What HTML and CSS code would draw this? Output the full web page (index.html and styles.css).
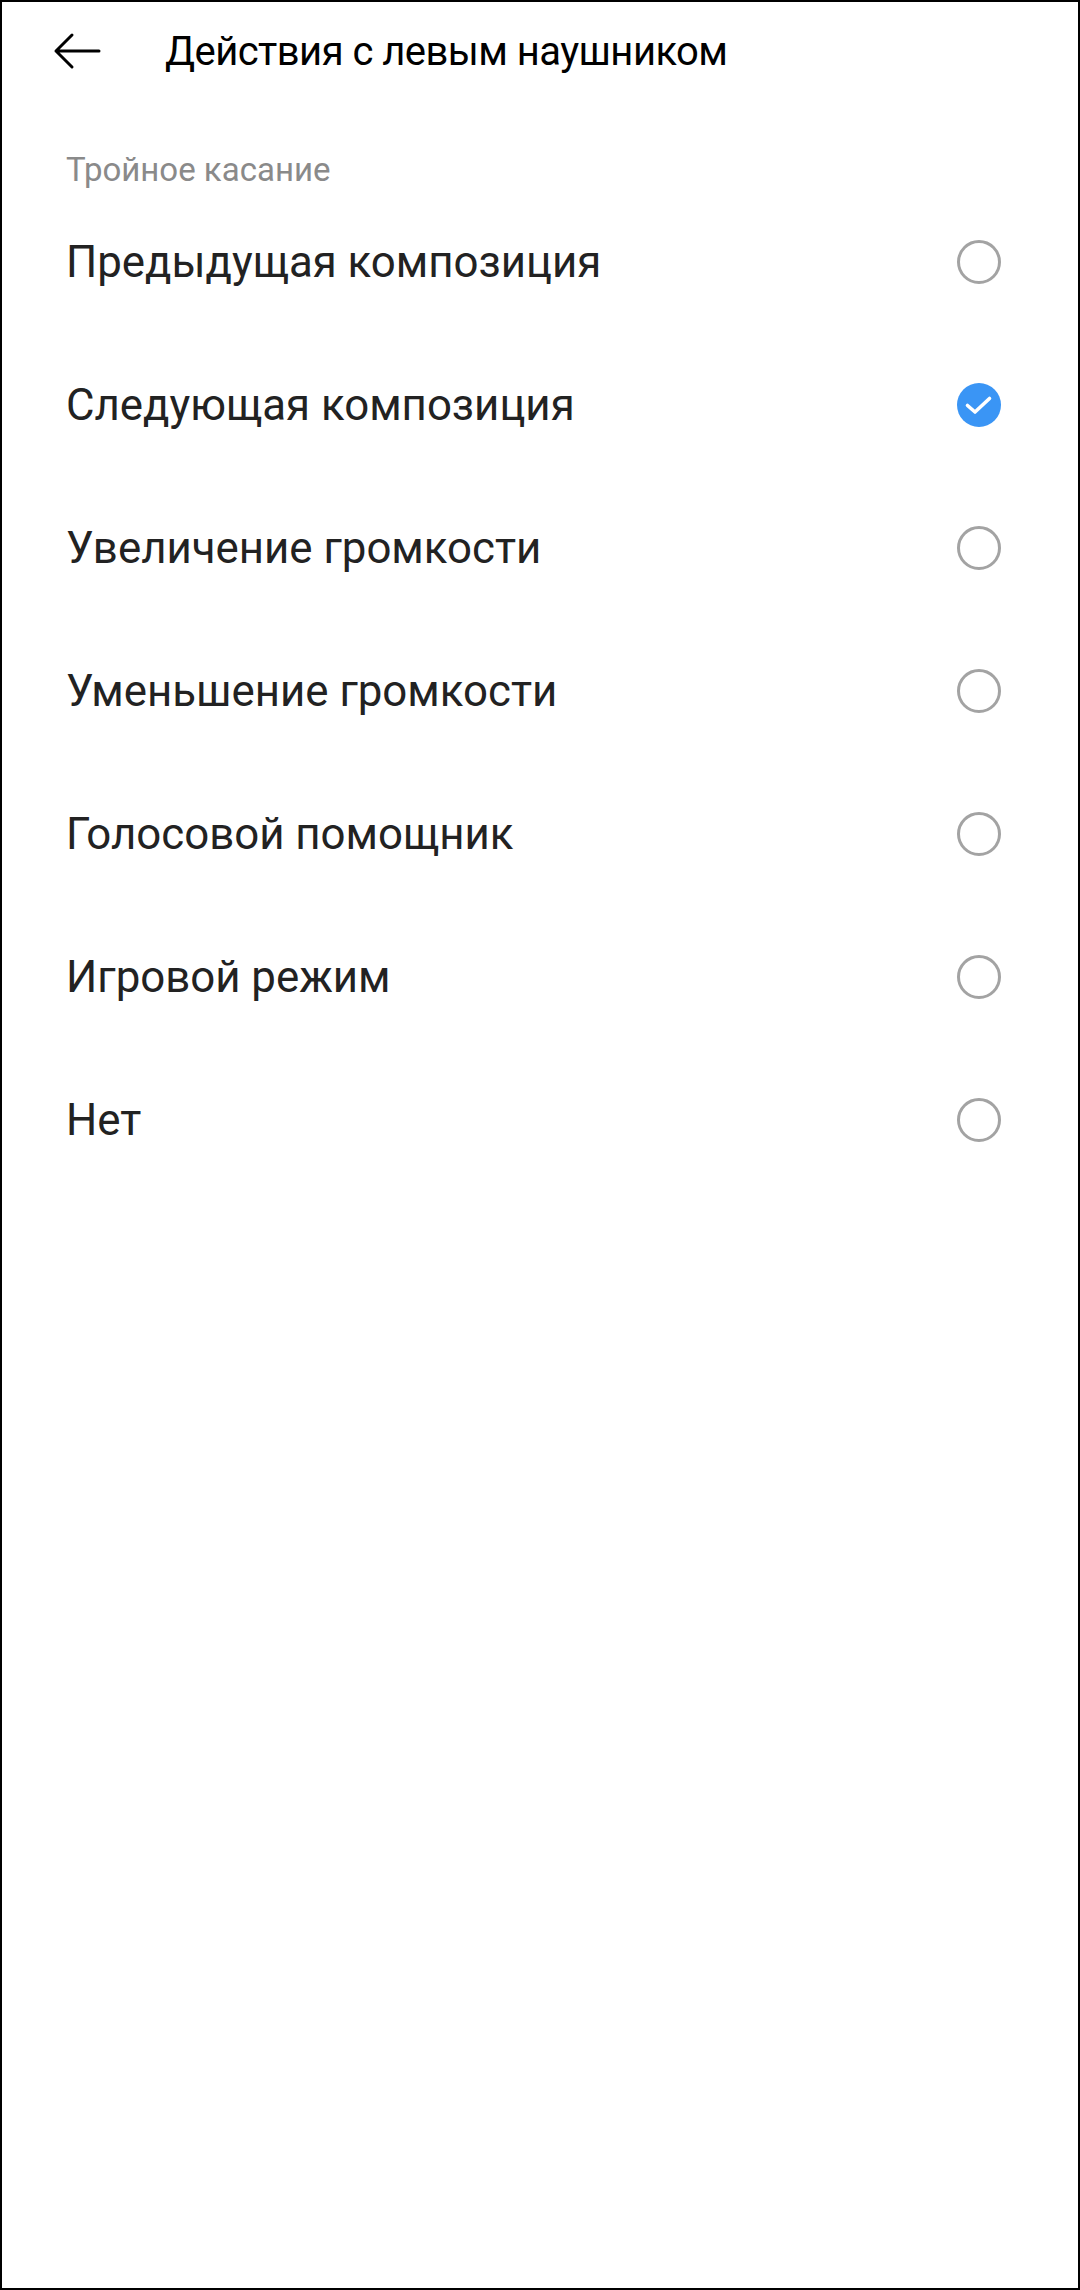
FILE: index.html
```html
<!DOCTYPE html>
<html lang="ru">
<head>
<meta charset="utf-8">
<title>Действия с левым наушником</title>
<link rel="stylesheet" href="styles.css">
</head>
<body>
<div class="screen">
  <header class="topbar">
    <svg class="back" width="48" height="40" viewBox="0 0 48 40" aria-hidden="true">
      <path d="M46 20H3M19 4L3 20L19 36" fill="none" stroke="#000" stroke-width="3" stroke-linecap="round" stroke-linejoin="round"/>
    </svg>
    <h1 class="title">Действия с левым наушником</h1>
  </header>
  <div class="section-label">Тройное касание</div>
  <ul class="options">
    <li class="option"><span class="label">Предыдущая композиция</span><span class="radio"></span></li>
    <li class="option"><span class="label">Следующая композиция</span>
      <svg class="radio-on" width="44" height="44" viewBox="0 0 44 44" aria-hidden="true">
        <circle cx="22" cy="22" r="22" fill="#3a95f5"/>
        <path d="M10.5 22.5L18 29L32.5 15.5" fill="none" stroke="#fff" stroke-width="3.6" stroke-linecap="round" stroke-linejoin="round"/>
      </svg>
    </li>
    <li class="option"><span class="label">Увеличение громкости</span><span class="radio"></span></li>
    <li class="option"><span class="label">Уменьшение громкости</span><span class="radio"></span></li>
    <li class="option"><span class="label">Голосовой помощник</span><span class="radio"></span></li>
    <li class="option"><span class="label">Игровой режим</span><span class="radio"></span></li>
    <li class="option"><span class="label">Нет</span><span class="radio"></span></li>
  </ul>
</div>
</body>
</html>
```
FILE: styles.css
```css
html, body {
  margin: 0;
  padding: 0;
  background: #fff;
}
.screen {
  box-sizing: border-box;
  width: 1080px;
  height: 2290px;
  border: 2px solid #000;
  background: #fff;
  font-family: Roboto, "Noto Sans", sans-serif;
  overflow: hidden;
}
.topbar {
  display: flex;
  align-items: center;
  height: 98px;
  padding-left: 51px;
}
.back {
  flex: none;
  display: block;
}
.title {
  margin: 0 0 0 64px;
  font-size: 40px;
  font-weight: 400;
  color: #000;
  letter-spacing: -0.55px;
}
.section-label {
  padding: 50px 0 0 64px;
  height: 40px;
  font-size: 33px;
  line-height: 40px;
  color: #8a8a8a;
}
.options {
  list-style: none;
  margin: 0;
  padding: 0;
}
.option {
  display: flex;
  align-items: center;
  justify-content: space-between;
  height: 143px;
  padding: 0 77px 0 64px;
}
.label {
  font-size: 43.8px;
  color: #222;
}
.radio {
  box-sizing: border-box;
  width: 44px;
  height: 44px;
  border: 3px solid #a3a3a3;
  border-radius: 50%;
}
.radio-on {
  display: block;
}
```
